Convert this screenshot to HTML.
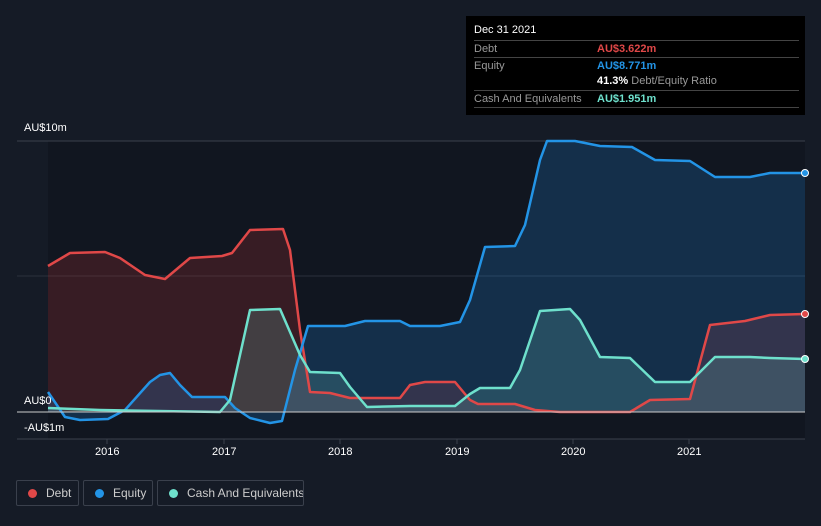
<!DOCTYPE html><html><head><style>
body{margin:0;width:821px;height:526px;background:#151b26;font-family:"Liberation Sans",sans-serif;overflow:hidden;position:relative}
.t{position:absolute;color:#fff;font-size:11px}
.tip{position:absolute;left:466px;top:16px;width:339px;height:99px;background:#000}
.tip .r{position:absolute;left:8px;width:325px;border-top:1px solid #444;font-size:11px;color:#999;height:16px;line-height:16px}
.lg{position:absolute;top:480px;height:26px;border:1px solid #3a404c;border-radius:2px;color:#ccc;font-size:12px;line-height:24px;box-sizing:border-box;white-space:nowrap;overflow:hidden}
.lg i{display:inline-block;width:9px;height:9px;border-radius:50%;margin:0 9px 0 11px;vertical-align:-1px}
</style></head><body>
<svg width="821" height="526" style="position:absolute;left:0;top:0">
<rect x="48" y="141" width="757" height="298" fill="#111620"/>
<line x1="17" y1="141" x2="805" y2="141" stroke="#3a404c"/>
<line x1="17" y1="276" x2="805" y2="276" stroke="#2a303c"/>
<line x1="17" y1="439" x2="805" y2="439" stroke="#3a404c"/>
<polygon fill="rgba(190,50,50,0.22)" points="48,412 48,266 70,253 105,252 120,258 145,275 165,279 190,258 222,256 232,253 250,230 283,229 290,250 300,330 310,392 330,393 350,398 400,398 410,385 425,382 455,382 470,400 478,404 515,404 535,410 560,412 630,412 650,400 690,399 710,325 745,321 770,315 805,314 805,412"/>
<polygon fill="rgba(33,150,243,0.2)" points="48,412 48,392 65,417 80,420 108,419 125,410 150,382 160,375 170,373 180,385 192,397 225,397 235,408 250,418 270,423 282,421 295,370 308,326 345,326 365,321 400,321 410,326 440,326 460,322 470,300 485,247 515,246 525,225 540,160 547,141 575,141 600,146 632,147 655,160 690,161 715,177 750,177 770,173 805,173 805,412"/>
<polygon fill="rgba(110,200,190,0.2)" points="48,412 48,408 100,410 220,412 230,400 250,310 280,309 300,355 310,372 340,373 350,387 367,407 410,406 455,406 470,394 480,388 510,388 520,370 540,311 570,309 580,320 600,357 630,358 655,382 690,382 715,357 750,357 770,358 805,359 805,412"/>
<g fill="none" stroke-width="2.5" stroke-linejoin="round">
<polyline stroke="#e04848" points="48,266 70,253 105,252 120,258 145,275 165,279 190,258 222,256 232,253 250,230 283,229 290,250 300,330 310,392 330,393 350,398 400,398 410,385 425,382 455,382 470,400 478,404 515,404 535,410 560,412 630,412 650,400 690,399 710,325 745,321 770,315 805,314"/>
<polyline stroke="#2394e6" points="48,392 65,417 80,420 108,419 125,410 150,382 160,375 170,373 180,385 192,397 225,397 235,408 250,418 270,423 282,421 295,370 308,326 345,326 365,321 400,321 410,326 440,326 460,322 470,300 485,247 515,246 525,225 540,160 547,141 575,141 600,146 632,147 655,160 690,161 715,177 750,177 770,173 805,173"/>
<polyline stroke="#6ee0cc" points="48,408 100,410 220,412 230,400 250,310 280,309 300,355 310,372 340,373 350,387 367,407 410,406 455,406 470,394 480,388 510,388 520,370 540,311 570,309 580,320 600,357 630,358 655,382 690,382 715,357 750,357 770,358 805,359"/>
</g>
<line x1="17" y1="412" x2="805" y2="412" stroke="#ccc" stroke-width="1"/>
<circle cx="805" cy="173" r="3.5" fill="#2394e6" stroke="#fff"/>
<circle cx="805" cy="314" r="3.5" fill="#e04848" stroke="#fff"/>
<circle cx="805" cy="359" r="3.5" fill="#6ee0cc" stroke="#fff"/>
<g stroke="#3a404c"><line x1="107" y1="439" x2="107" y2="444"/><line x1="224" y1="439" x2="224" y2="444"/><line x1="340" y1="439" x2="340" y2="444"/><line x1="457" y1="439" x2="457" y2="444"/><line x1="573" y1="439" x2="573" y2="444"/><line x1="689" y1="439" x2="689" y2="444"/></g>
</svg>
<div class="t" style="left:24px;top:122px">AU$10m</div>
<div class="t" style="left:24px;top:395px">AU$0</div>
<div class="t" style="left:24px;top:422px">-AU$1m</div>
<div class="t" style="left:95px;top:446px">2016</div>
<div class="t" style="left:212px;top:446px">2017</div>
<div class="t" style="left:328px;top:446px">2018</div>
<div class="t" style="left:445px;top:446px">2019</div>
<div class="t" style="left:561px;top:446px">2020</div>
<div class="t" style="left:677px;top:446px">2021</div>
<div class="tip">
<div style="position:absolute;left:8px;top:8px;color:#fff;font-size:11px">Dec 31 2021</div>
<div class="r" style="top:24px">Debt<span style="position:absolute;left:123px;color:#e04848;font-weight:bold">AU$3.622m</span></div>
<div class="r" style="top:41px">Equity<span style="position:absolute;left:123px;color:#2394e6;font-weight:bold">AU$8.771m</span></div>
<div class="r" style="top:57px;border:none"><span style="position:absolute;left:123px"><b style="color:#fff">41.3%</b> Debt/Equity Ratio</span></div>
<div class="r" style="top:74px;border-bottom:1px solid #444">Cash And Equivalents<span style="position:absolute;left:123px;color:#6ee0cc;font-weight:bold">AU$1.951m</span></div>
</div>
<div class="lg" style="left:16px;width:63px"><i style="background:#e04848"></i>Debt</div>
<div class="lg" style="left:83px;width:70px"><i style="background:#2394e6"></i>Equity</div>
<div class="lg" style="left:157px;width:147px"><i style="background:#6ee0cc"></i>Cash And Equivalents</div>
</body></html>
